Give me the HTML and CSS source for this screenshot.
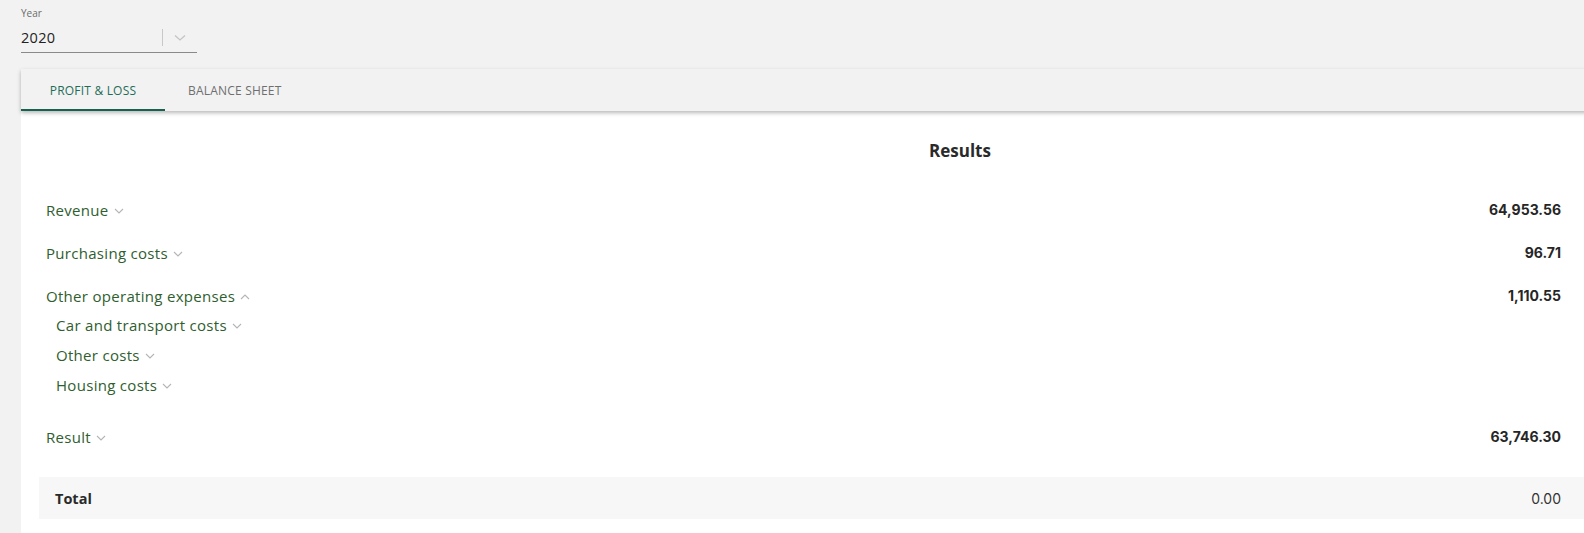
FILE: index.html
```html
<!DOCTYPE html>
<html>
<head>
<meta charset="utf-8">
<link rel="stylesheet" href="styles.css">
</head>
<body>
<div class="page">
  <div class="year-field">
    <div class="year-label">Year</div>
    <div class="year-select">
      <span class="year-value">2020</span>
      <span class="year-divider"></span>
      <svg class="year-chevron" width="12" height="8" viewBox="0 0 12 8"><path d="M1 1.5 L6 6 L11 1.5" fill="none" stroke="#c4c4c4" stroke-width="1.3"/></svg>
    </div>
  </div>

  <div class="card">
    <div class="tabs">
      <div class="tab active">PROFIT &amp; LOSS</div>
      <div class="tab">BALANCE SHEET</div>
    </div>
    <div class="content">
      <h2 class="title">Results</h2>
      <div class="rows">
        <div class="row top">
          <span class="label">Revenue <svg class="chev" width="10" height="6" viewBox="0 0 10 6"><path d="M1 1 L5 5 L9 1" fill="none" stroke="#b5b5b5" stroke-width="1.1"/></svg></span>
          <span class="value">64,953.56</span>
        </div>
        <div class="row top">
          <span class="label">Purchasing costs <svg class="chev" width="10" height="6" viewBox="0 0 10 6"><path d="M1 1 L5 5 L9 1" fill="none" stroke="#b5b5b5" stroke-width="1.1"/></svg></span>
          <span class="value">96.71</span>
        </div>
        <div class="row top">
          <span class="label">Other operating expenses <svg class="chev" width="10" height="6" viewBox="0 0 10 6"><path d="M1 5 L5 1 L9 5" fill="none" stroke="#b5b5b5" stroke-width="1.1"/></svg></span>
          <span class="value">1,110.55</span>
        </div>
        <div class="subrows">
          <div class="row sub">
            <span class="label">Car and transport costs <svg class="chev" width="10" height="6" viewBox="0 0 10 6"><path d="M1 1 L5 5 L9 1" fill="none" stroke="#b5b5b5" stroke-width="1.1"/></svg></span>
          </div>
          <div class="row sub">
            <span class="label">Other costs <svg class="chev" width="10" height="6" viewBox="0 0 10 6"><path d="M1 1 L5 5 L9 1" fill="none" stroke="#b5b5b5" stroke-width="1.1"/></svg></span>
          </div>
          <div class="row sub">
            <span class="label">Housing costs <svg class="chev" width="10" height="6" viewBox="0 0 10 6"><path d="M1 1 L5 5 L9 1" fill="none" stroke="#b5b5b5" stroke-width="1.1"/></svg></span>
          </div>
        </div>
        <div class="row top result">
          <span class="label">Result <svg class="chev" width="10" height="6" viewBox="0 0 10 6"><path d="M1 1 L5 5 L9 1" fill="none" stroke="#b5b5b5" stroke-width="1.1"/></svg></span>
          <span class="value">63,746.30</span>
        </div>
        <div class="row total">
          <span class="total-label">Total</span>
          <span class="total-value">0.00</span>
        </div>
      </div>
    </div>
  </div>
</div>
</body>
</html>
```

FILE: styles.css
```css
html, body {
  margin: 0;
  padding: 0;
  background: #f2f2f2;
  overflow: hidden;
}
body {
  font-family: "Open Sans", "Noto Sans", sans-serif;
  color: #2b2b2b;
}
.page {
  width: 1878px;
  padding: 6px 0 0 21px;
}
.year-field {
  width: 176px;
}
.year-label {
  font-size: 10px;
  color: #6b6b6b;
  line-height: 14px;
}
.year-select {
  display: flex;
  align-items: center;
  height: 29px;
  border-bottom: 1px solid #8a8a8a;
  margin-top: 3px;
}
.year-value {
  font-size: 14.5px;
  color: #222;
  flex: 1;
  letter-spacing: 0.3px;
}
.year-divider {
  width: 1px;
  height: 17px;
  background: #c8c8c8;
  margin-right: 11px;
}
.year-chevron {
  margin-right: 11px;
}
.card {
  margin-top: 16px;
  background: #fff;
}
.tabs {
  display: flex;
  height: 42px;
  background: #f2f2f2;
  box-shadow: 0 2px 4px rgba(0, 0, 0, 0.28);
  position: relative;
  z-index: 1;
}
.tab {
  display: flex;
  align-items: center;
  justify-content: center;
  font-size: 12px;
  color: #6f6f6f;
  letter-spacing: 0.2px;
  padding: 0 23px;
  box-sizing: border-box;
}
.tab.active {
  width: 144px;
  color: #1f6d58;
  border-bottom: 2px solid #17624f;
  padding-top: 2px;
}
.content {
  padding: 28px 18px 20px 18px;
  height: 400px;
}
.title {
  margin: 0;
  text-align: center;
  font-size: 17px;
  font-weight: 700;
  color: #2a2a2a;
  line-height: 24px;
}
.rows {
  margin-top: 25px;
}
.row {
  display: flex;
  align-items: center;
  justify-content: space-between;
  padding: 0 320px 0 7px;
}
.row.top {
  height: 43px;
}
.subrows {
  margin-top: -7px;
  margin-bottom: 15px;
}
.row.sub {
  height: 30px;
  padding-left: 17px;
}
.label {
  font-size: 15px;
  color: #2f5e2f;
  display: inline-flex;
  align-items: center;
  gap: 5px;
  letter-spacing: 0.3px;
}
.chev {
  margin-top: 2px;
}
.value {
  font-family: Inter, "Liberation Sans", sans-serif;
  font-size: 14px;
  font-weight: 700;
  color: #262626;
}
.row.total {
  margin-top: 19px;
  height: 42px;
  background: #f7f7f7;
  padding-left: 16px;
}
.total-label {
  font-size: 14.5px;
  font-weight: 700;
  color: #2a2a2a;
}
.total-value {
  font-family: Inter, "Liberation Sans", sans-serif;
  font-size: 14px;
  color: #333;
}
```
